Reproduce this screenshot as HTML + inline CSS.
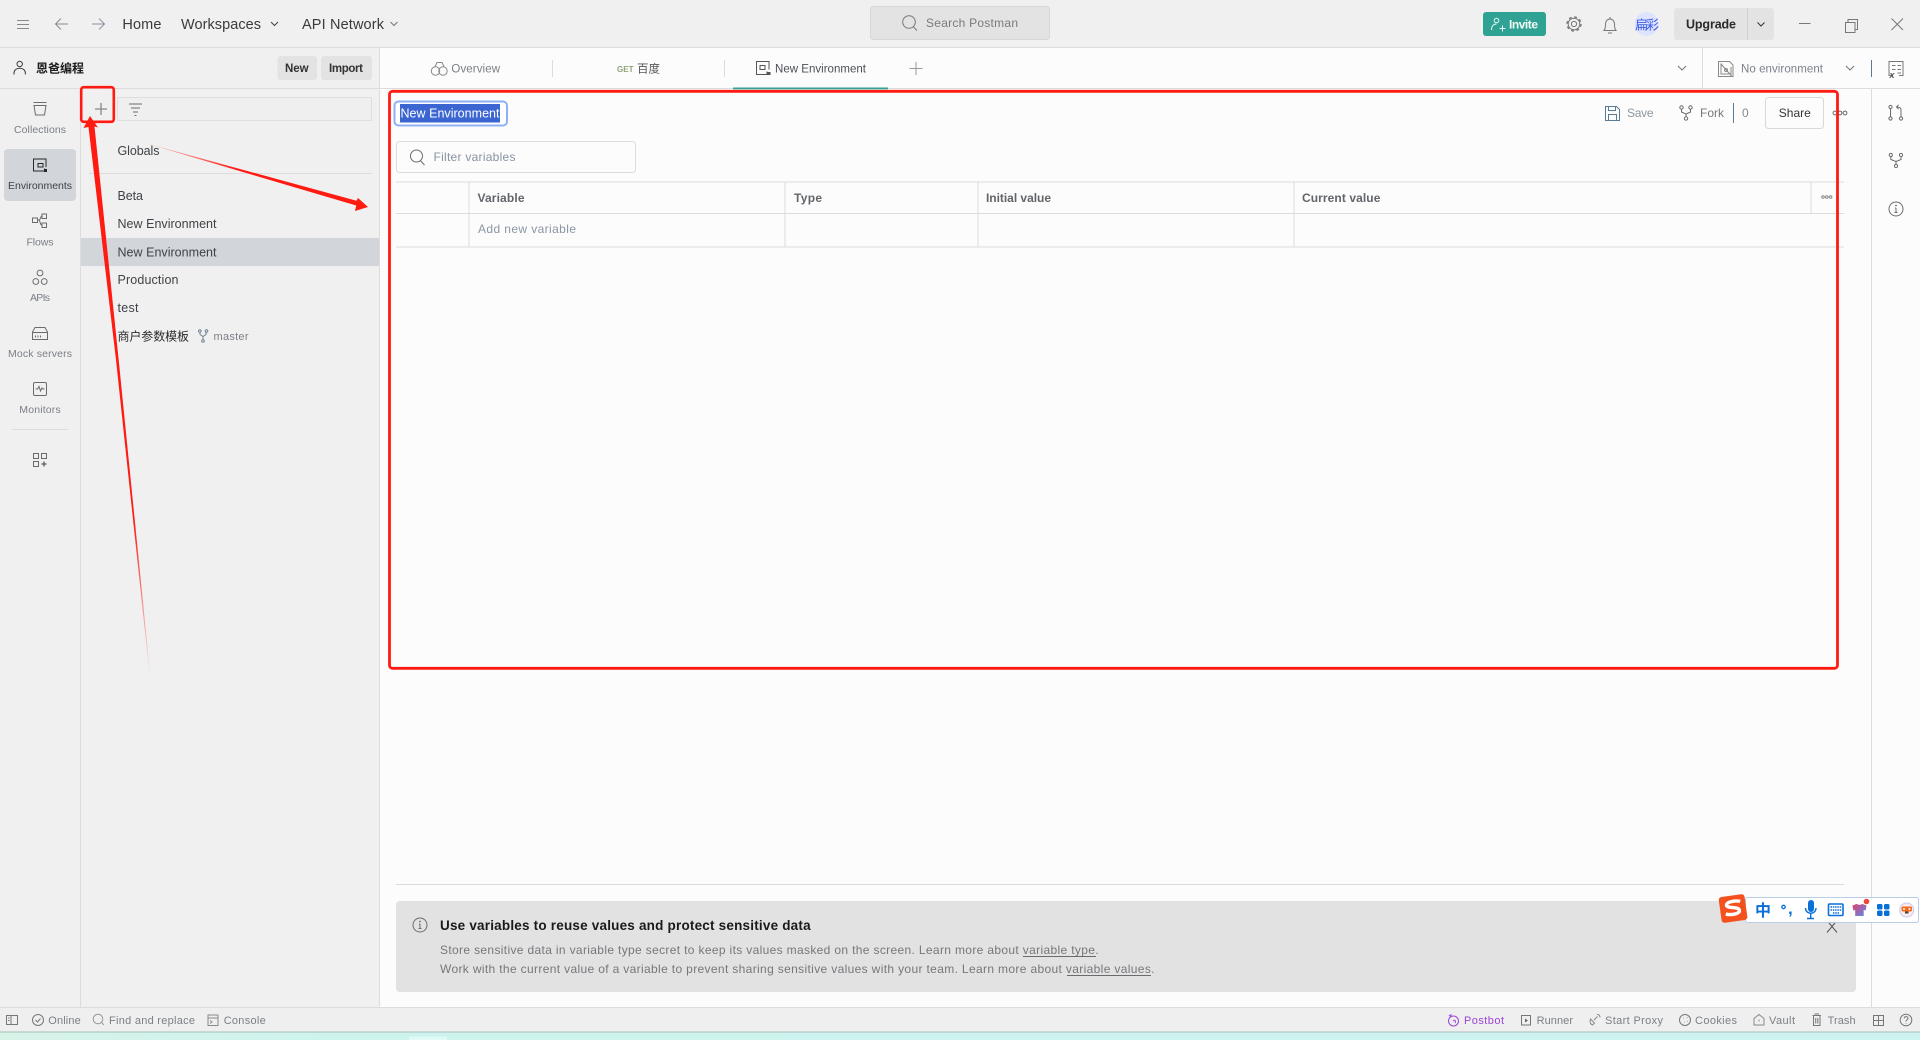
<!DOCTYPE html>
<html lang="en">
<head>
<meta charset="utf-8">
<title>Postman - New Environment</title>
<style>
html,body{margin:0;padding:0;width:1920px;height:1040px;overflow:hidden;background:#f0f0f0}
svg{display:block;filter:blur(.3px)}
text{font-family:"Liberation Sans","Noto Sans CJK SC",sans-serif;font-size:12px;fill:#6b6b6b}
.i{fill:none;stroke:#6b6b6b;stroke-width:1}
.nav{font-size:10.5px;fill:#7a7f86}
.li{font-size:12.5px;fill:#3f4247}
.top{font-size:14.5px;fill:#3a3a3a}
.st{font-size:11px;fill:#7b7f86}
.hd{font-weight:700;fill:#62656a;font-size:12px}
</style>
</head>
<body>
<svg width="1920" height="1040" viewBox="0 0 1920 1040" xmlns="http://www.w3.org/2000/svg">
<defs>
<linearGradient id="tl" x1="0" x2="1" y1="0" y2="0"><stop offset="0" stop-color="#d6f3e8"/><stop offset=".2" stop-color="#cdf3ef"/><stop offset="1" stop-color="#cdf2f0"/></linearGradient>
<linearGradient id="sh" x1="0" x2="1" y1="0" y2="1"><stop offset="0" stop-color="#e0406a"/><stop offset="1" stop-color="#5a8cf5"/></linearGradient>
<linearGradient id="a1" gradientUnits="userSpaceOnUse" x1="0" y1="520" x2="0" y2="677"><stop offset="0" stop-color="#ff1a12"/><stop offset="1" stop-color="#ff1a12" stop-opacity="0"/></linearGradient>
<linearGradient id="a2" gradientUnits="userSpaceOnUse" x1="143" y1="143" x2="240" y2="170"><stop offset="0" stop-color="#ff1a12" stop-opacity=".15"/><stop offset="1" stop-color="#ff1a12"/></linearGradient>
</defs>

<!-- backgrounds -->
<rect width="1920" height="1040" fill="#f0f0f0"/>
<rect x="380" y="47" width="1540" height="960" fill="#fcfcfc"/>
<rect x="0" y="47" width="1920" height="1" fill="#dcdcdc"/>
<rect x="0" y="88" width="1920" height="1" fill="#dcdcdc"/>
<rect x="80" y="88" width="1" height="919" fill="#dcdcdc"/>
<rect x="379" y="47" width="1" height="960" fill="#dcdcdc"/>
<rect x="1871" y="88" width="1" height="919" fill="#dcdcdc"/>

<!-- title bar -->
<g class="i"><path d="M17 20.500h12M17 24.500h12M17 28.500h12" style="stroke:#8a8a8a"/>
<path d="M68 24H56M61 18.500L55.500 24 61 29.500" style="stroke:#8a8a8a"/>
<path d="M92 24h12M99 18.500l5.500 5.500-5.500 5.500" style="stroke:#8a94a0"/>
<path d="M271 22l3.500 3.500 3.500-3.500" style="stroke:#444"/>
<path d="M390.500 22l3.500 3.500 3.500-3.500" style="stroke:#777"/></g>
<text class="top" x="122.400" y="29" textLength="39">Home</text>
<text class="top" x="181" y="29" textLength="80">Workspaces</text>
<text class="top" x="302" y="29" textLength="82">API Network</text>

<rect x="870.500" y="6.500" width="179" height="33" rx="3" fill="#e3e3e3" stroke="#d6d6d6"/>
<g class="i" style="stroke:#777"><circle cx="909" cy="22" r="6.300"/><path d="M913.500 27l3.500 3.500"/></g>
<text x="926" y="27" textLength="92" style="fill:#7a7a7a">Search Postman</text>

<rect x="1483" y="12" width="63" height="24" rx="3" fill="#2fa294"/>
<g class="i" style="stroke:#e8f6f3"><circle cx="1496.500" cy="20.500" r="2.300"/><path d="M1491.500 30c0-4 2-6 5-6M1499.500 28.500h6M1502.500 25.500v6"/></g>
<text x="1509" y="28.500" textLength="29" style="fill:#f4fbf9;font-weight:700;font-size:12px">Invite</text>

<g class="i" style="stroke:#777"><circle cx="1574" cy="24" r="2.600"/><circle cx="1574" cy="24" r="5.800"/><circle cx="1574" cy="24" r="7" stroke-width="1.400" stroke-dasharray="2.800 2.700"/>
<path d="M1604 30.500c1.300-1.500 1.500-3 1.500-6 0-3.500 2-5.500 4.500-5.500s4.500 2 4.500 5.500c0 3 .2 4.500 1.500 6zM1610 17v2M1608 33h4"/></g>
<circle cx="1646.500" cy="24" r="12" fill="#e0e3ff"/>
<text x="1635" y="29.500" textLength="24" style="font-size:13px;fill:#3a5ce8">扁彩</text>

<rect x="1674" y="8" width="100" height="32" rx="3" fill="#e3e3e3"/>
<rect x="1747" y="8" width="1" height="32" fill="#d0d0d0"/>
<text x="1686" y="28.500" textLength="50" style="font-size:12.500px;fill:#2a2a2a;font-weight:700">Upgrade</text>
<path class="i" d="M1757.500 22.500l3.500 3.500 3.500-3.500" style="stroke:#333"/>
<g class="i" style="stroke:#777"><path d="M1799 23.500h11.500"/><path d="M1845.500 22.500h9.500v10h-9.500zM1848 22.500v-3h9.500v10h-2.500"/><path d="M1891.500 18.500l11.500 11.500M1903 18.500l-11.500 11.500"/></g>

<!-- workspace header -->
<g class="i" style="stroke:#3a3d42"><circle cx="19.700" cy="64" r="2.700"/><path d="M14 74.500v-1.500c0-3 2.500-4.800 5.700-4.800s5.700 1.800 5.700 4.800v1.500"/></g>
<text x="36" y="72.500" textLength="48" style="font-size:12px;fill:#1c1c1c;font-weight:700">恩爸编程</text>
<rect x="277.500" y="56" width="39.500" height="24" rx="3" fill="#e3e3e3"/>
<rect x="321" y="56" width="51" height="24" rx="3" fill="#e3e3e3"/>
<text x="285" y="72" textLength="23.600" style="font-size:11.500px;fill:#333;font-weight:700">New</text>
<text x="329" y="72" textLength="34" style="font-size:11.500px;fill:#333;font-weight:700">Import</text>

<!-- left nav -->
<rect x="4" y="149" width="72" height="52" rx="4" fill="#d2d5d9"/>
<g class="i">
<path d="M33.500 102.500h13M34 105.500h12l-1.500 9.500h-9z"/>
<path d="M44.500 168.500v2.500h-11v-12h12.500v8M38 163.500h5v3.500h-5z" style="stroke:#25282c"/>
<rect x="32.500" y="218" width="5" height="4.500"/><rect x="42" y="214" width="4.500" height="4.500"/><rect x="42" y="223" width="4.500" height="4.500"/><path d="M37.500 220h2c2-3 1-4 2.500-4M39.500 220.500c1 3 1 4.500 2.500 4.500"/>
<circle cx="40" cy="273" r="2.900"/><circle cx="35.800" cy="281.500" r="2.900"/><circle cx="44.200" cy="281.500" r="2.900"/>
<path d="M32.500 339.500v-7.500l2.500-4.500h10l2.500 4.500v7.500zM32.500 332.500h15M35.500 335.500v2M38 335.500v2M40.500 335.500v2"/>
<rect x="33.500" y="382.500" width="13" height="13" rx="1.500"/><path d="M35.500 389l2 0 1.500-2.500 1.500 4.500 1.500-3 1 1h1.500"/>
<rect x="33.500" y="453.500" width="5" height="5"/><rect x="41.500" y="453.500" width="5" height="5"/><rect x="33.500" y="461.500" width="5" height="5"/><path d="M44 461.500v5M41.500 464h5" stroke-width="1.500"/>
</g>
<rect x="44" y="169" width="3" height="3" fill="#25282c"/>
<text class="nav" x="14" y="133" textLength="52">Collections</text>
<text class="nav" x="8" y="189" textLength="64" style="fill:#3f4247">Environments</text>
<text class="nav" x="26.500" y="245.500" textLength="27">Flows</text>
<text class="nav" x="30" y="301" textLength="20">APIs</text>
<text class="nav" x="8" y="357" textLength="64">Mock servers</text>
<text class="nav" x="19.300" y="413" textLength="41.400">Monitors</text>
<rect x="12" y="429" width="56" height="1" fill="#dcdcdc"/>

<!-- list -->
<path class="i" d="M101 103v12M95 109h12" style="stroke:#888;stroke-width:1.300"/>
<rect x="117.500" y="97.500" width="254" height="23" rx="1" fill="#efefef" stroke="#dedede"/>
<path class="i" d="M129 104h13M131 108h9M133 112h5M134.500 115.500h2"/>
<text class="li" x="117.500" y="155" textLength="42">Globals</text>
<rect x="89" y="173" width="283" height="1" fill="#dcdcdc"/>
<text class="li" x="117.500" y="200" textLength="25.500">Beta</text>
<text class="li" x="117.500" y="228" textLength="99">New Environment</text>
<rect x="81" y="238" width="298" height="28" fill="#d2d5d9"/>
<text class="li" x="117.500" y="256.500" textLength="99">New Environment</text>
<text class="li" x="117.500" y="284" textLength="61">Production</text>
<text class="li" x="117.500" y="312" textLength="21">test</text>
<text class="li" x="117.500" y="340.500" textLength="71.500" style="font-size:12px;fill:#2a2a2a">商户参数模板</text>
<g class="i" style="stroke:#6f8296"><circle cx="199.800" cy="331" r="1.300"/><circle cx="206.500" cy="331" r="1.300"/><circle cx="203" cy="341" r="1.300"/><path d="M200 332.500v2l3 2 3-2v-2M203 336.500v3"/></g>
<text x="213.500" y="340" textLength="35" style="font-size:11px;fill:#7b7f86">master</text>

<!-- tabs -->
<g class="i" style="stroke:#8a8a8a"><circle cx="435.500" cy="71" r="4.200"/><circle cx="443" cy="71" r="4.200"/><path d="M435 66.500l2-4h5l2 4"/></g>
<text x="451.400" y="72.500" textLength="48.600" style="font-size:11.500px;fill:#7b7f86">Overview</text>
<rect x="552" y="60" width="1" height="17" fill="#dcdcdc"/>
<text x="617" y="72" textLength="16.500" style="font-size:8px;font-weight:700;fill:#8ea57a">GET</text>
<text x="637" y="72.500" textLength="23" style="font-size:11.500px;fill:#555">百度</text>
<rect x="724" y="60" width="1" height="17" fill="#dcdcdc"/>
<g class="i" style="stroke:#555"><path d="M767 71.500v3h-10.500v-13h12.500v8M760 65.500h5v4h-5z"/></g>
<rect x="767.500" y="72" width="3" height="3" fill="#555"/>
<text x="775" y="72.500" textLength="91" style="font-size:11.500px;fill:#4c5056">New Environment</text>
<rect x="733" y="87.500" width="155" height="1.800" fill="#2fa294"/>
<path class="i" d="M916 62v13M909.500 68.500h13" style="stroke:#999"/>
<path class="i" d="M1678 66l4 4 4-4" style="stroke:#777"/>
<rect x="1702" y="47" width="1" height="41" fill="#dcdcdc"/>
<g class="i" style="stroke:#888"><path d="M1718.500 61.500h11l3.500 3.500v11.500h-14.500zM1722 64h-1v10h10v-7M1721 64l11 12.500"/><circle cx="1726" cy="70" r="1.500"/></g>
<text x="1741" y="72.500" textLength="82" style="font-size:11.500px;fill:#7a828c">No environment</text>
<path class="i" d="M1846 66l4 4 4-4" style="stroke:#777"/>
<rect x="1871" y="60" width="1" height="17" fill="#5d7a94"/>
<g class="i" style="stroke:#777"><path d="M1893 75.500h-4v-14h14v14h-4M1892 65.500h3.500M1892 69.500h3.500M1897.500 65.500h3.500M1897.500 69.500h3.500M1897.500 73h3.500"/></g>
<text x="1889.500" y="78" style="font-size:9px;font-weight:700;font-style:italic;fill:#555">x</text>

<!-- environment head -->
<rect x="394.500" y="101.500" width="112.500" height="24" rx="4" fill="#fff" stroke="#8fb0f5" stroke-width="2"/>
<rect x="400" y="104" width="100" height="18.500" fill="#3b65d0"/>
<text x="400.500" y="117.500" textLength="99" style="font-size:12.500px;fill:#fff">New Environment</text>
<g class="i" style="stroke:#5d7a94"><path d="M1605.500 106.500h11l3 3v11h-14zM1608.500 106.500v4h7v-4M1608.500 120.500v-6h8v6"/></g>
<text x="1627" y="117" textLength="26.500" style="font-size:12px;fill:#8d97a1">Save</text>
<g class="i"><circle cx="1681.500" cy="107.500" r="1.700"/><circle cx="1690.500" cy="107.500" r="1.700"/><circle cx="1686" cy="118.500" r="1.700"/><path d="M1681.500 109.500v2.500l4.500 2 4.500-2v-2.500M1686 114v3"/></g>
<text x="1700" y="117" textLength="24" style="font-size:12px;fill:#777">Fork</text>
<rect x="1733" y="103" width="1" height="20" fill="#5d7a94"/>
<text x="1742" y="117" textLength="7" style="font-size:12px;fill:#888">0</text>
<rect x="1765.500" y="97.500" width="58" height="31" rx="3" fill="#fcfcfc" stroke="#d8d8d8"/>
<text x="1778.800" y="117" textLength="32" style="font-size:12px;fill:#333">Share</text>
<g class="i"><circle cx="1835" cy="113" r="1.900"/><circle cx="1840" cy="113" r="1.900"/><circle cx="1845" cy="113" r="1.900"/></g>

<rect x="396.500" y="141.500" width="239" height="31" rx="3" fill="#fcfcfc" stroke="#dcdcdc"/>
<g class="i"><circle cx="416.500" cy="156" r="6"/><path d="M420.700 161l3.800 4"/></g>
<text x="433.500" y="161" textLength="82" style="font-size:12px;fill:#8793a0">Filter variables</text>

<!-- table -->
<g fill="#dcdcdc">
<rect x="396" y="181.500" width="1448" height="1"/>
<rect x="396" y="213" width="1448" height="1"/>
<rect x="396" y="246.500" width="1448" height="1"/>
<rect x="468.500" y="182" width="1" height="65"/>
<rect x="784.500" y="182" width="1" height="65"/>
<rect x="977.500" y="182" width="1" height="65"/>
<rect x="1293.500" y="182" width="1" height="65"/>
<rect x="1810.500" y="182" width="1" height="32"/>
</g>
<text class="hd" x="477.500" y="202" textLength="47">Variable</text>
<text class="hd" x="794" y="202" textLength="28">Type</text>
<text class="hd" x="986" y="202" textLength="65">Initial value</text>
<text class="hd" x="1302" y="202" textLength="78.400">Current value</text>
<g class="i" style="stroke:#888"><circle cx="1823" cy="197" r="1.300"/><circle cx="1826.800" cy="197" r="1.300"/><circle cx="1830.600" cy="197" r="1.300"/></g>
<text x="478" y="233" textLength="98" style="font-size:12px;fill:#8a96a3">Add new variable</text>

<!-- right rail -->
<g class="i"><circle cx="1890.500" cy="107" r="1.600"/><circle cx="1890.500" cy="118.500" r="1.600"/><circle cx="1901" cy="118.500" r="1.600"/><path d="M1890.500 109v8M1901 117v-7c0-2-1-3-4-3M1898.500 104.800l-2 2.200 2 2.200"/>
<circle cx="1890.800" cy="155" r="1.600"/><circle cx="1901" cy="155" r="1.600"/><circle cx="1896" cy="166" r="1.600"/><path d="M1890.800 156.800v2.700l5.200 2 5-2v-2.700M1896 161.500v3"/>
<circle cx="1896" cy="209" r="7"/><path d="M1896 208v4.500M1894.500 212.500h3M1895 208h1"/></g>
<circle cx="1896" cy="205.500" r=".9" fill="#6b6b6b"/>

<!-- tip panel -->
<rect x="396" y="884" width="1448" height="1" fill="#dcdcdc"/>
<rect x="396" y="901" width="1460" height="91" rx="4" fill="#e2e2e2"/>
<g class="i"><circle cx="420" cy="925" r="7"/><path d="M420 924v4.500M418.500 928.500h3M419 924h1"/></g>
<circle cx="420" cy="921.500" r=".9" fill="#6b6b6b"/>
<text x="440" y="930" textLength="370.600" style="font-size:13.500px;font-weight:700;fill:#1a1a1a">Use variables to reuse values and protect sensitive data</text>
<text x="440" y="954" textLength="658.600" style="font-size:12px;fill:#75777b">Store sensitive data in variable type secret to keep its values masked on the screen. Learn more about variable type.</text>
<text x="440" y="973" textLength="714.500" style="font-size:12px;fill:#75777b">Work with the current value of a variable to prevent sharing sensitive values with your team. Learn more about variable values.</text>
<rect x="1023" y="956" width="73" height="1" fill="#6b6b6b"/>
<rect x="1067" y="975" width="84" height="1" fill="#6b6b6b"/>
<path class="i" d="M1827 932.500l10-12M1837 932.500l-10-12" style="stroke:#555"/>

<!-- status bar -->
<rect x="0" y="1007" width="1920" height="25" fill="#efefef"/>
<rect x="0" y="1007" width="1920" height="1" fill="#dcdcdc"/>
<rect x="0" y="1032" width="1920" height="8" fill="url(#tl)"/>
<rect x="0" y="1031.500" width="1920" height="1" fill="#a9bdba"/>
<path d="M409 1040v-1c0-2 1-2.500 3-2.500h32c2 0 3 .5 3 2.500v1z" fill="#e0faf6"/>

<g class="i" style="stroke:#777"><rect x="6.500" y="1015.500" width="11" height="9"/><path d="M11 1015.500v9M8 1018h1.500M8 1020.500h1.500"/>
<circle cx="38" cy="1020" r="5.500"/><path d="M35.500 1020l2 2 3-3.500"/>
<circle cx="98" cy="1019" r="4.800" style="stroke:#999"/><path d="M101.500 1022.500l2.500 2.500" style="stroke:#999"/>
<rect x="208" y="1015" width="10" height="10.500" style="stroke:#888"/><path d="M208 1018h10M210 1020.500l2 1.500-2 1.500" style="stroke:#888"/></g>
<text class="st" x="48.300" y="1024" textLength="32.400">Online</text>
<text class="st" x="109" y="1024" textLength="86">Find and replace</text>
<text class="st" x="223.700" y="1024" textLength="42">Console</text>

<g class="i" style="stroke:#9b45d6"><circle cx="1453.500" cy="1021" r="5"/><path d="M1449 1015l2 2M1451 1014v3M1453 1021c2-2 3 0 2 2"/></g>
<text class="st" x="1464" y="1024" textLength="40" style="fill:#9b45d6">Postbot</text>
<g class="i" style="stroke:#777"><rect x="1521.500" y="1015.500" width="9" height="9.500"/></g><path d="M1525 1018.500l3 2-3 2z" fill="#666"/>
<text class="st" x="1536.600" y="1024" textLength="36.400">Runner</text>
<g class="i" style="stroke:#888"><path d="M1590.500 1019l4 4 -2 2c-2-1-3-3-2-6zM1594 1020l3.500-3.500M1597 1014.500c2 0 3 1 3 3"/></g>
<text class="st" x="1605" y="1024" textLength="58">Start Proxy</text>
<g class="i" style="stroke:#777"><circle cx="1685" cy="1020" r="5.500"/><path d="M1683 1018h.5M1687 1017.500h.5M1684.500 1022h.5M1687.500 1021.500h.5"/></g>
<text class="st" x="1695" y="1024" textLength="42">Cookies</text>
<g class="i" style="stroke:#888"><path d="M1754 1025v-6.500l5-4 5 4v6.500zM1759 1019.500v2"/></g>
<text class="st" x="1769" y="1024" textLength="26">Vault</text>
<g class="i" style="stroke:#777"><path d="M1812.500 1015.500h8.500M1814.500 1014h4.500M1813.500 1016v9.500h6.500v-9.500M1815.700 1018v5.500M1817.800 1018v5.500"/></g>
<text class="st" x="1827.600" y="1024" textLength="28">Trash</text>
<g class="i" style="stroke:#777"><rect x="1873.500" y="1015.500" width="10" height="10"/><path d="M1878.500 1015.500v10M1873.500 1020.500h10"/></g>
<g class="i" style="stroke:#777"><circle cx="1906" cy="1020" r="5.800"/><path d="M1904.200 1018.500c0-2.500 3.800-2.500 3.800-.2 0 1.500-2 1.500-2 3.200M1906 1023v.6"/></g>

<!-- red annotations -->
<rect x="81.200" y="87.200" width="32.600" height="34.600" rx="2.500" fill="none" stroke="#ff1a12" stroke-width="2.600"/>
<rect x="389.500" y="91.300" width="1448" height="577" rx="3" fill="none" stroke="#ff1a12" stroke-width="2.800"/>
<polygon points="90,116 98,127.500 94.500,126.500 118.700,360 150.500,677 149.800,677 116,360 88.500,127 83.500,128" fill="url(#a1)"/>
<polygon points="143,142.500 356.500,200.800 358,198 368,207 355,211 356.200,205.500" fill="url(#a2)"/>

<!-- IME toolbar -->
<rect x="1745.500" y="897.500" width="173" height="25" rx="2" fill="#fff" stroke="#b9cfe8"/>
<g transform="rotate(-8 1733 908)">
<rect x="1720" y="895.500" width="26" height="26" rx="3" fill="#f4511e"/>
<path d="M1741 902.500c-3-1.500-13-2-14 1.500-1 4 12 3 12 7s-9 4-14 2" fill="none" stroke="#fff" stroke-width="3.400"/>
</g>
<text x="1755" y="916" textLength="16" style="font-size:16px;font-weight:700;fill:#0b6fd8">中</text>
<circle cx="1783.500" cy="907" r="1.700" fill="none" stroke="#0b6fd8" stroke-width="1.300"/>
<text x="1788" y="914" style="font-size:17px;font-weight:700;fill:#0b6fd8">,</text>
<rect x="1808" y="900" width="6" height="12" rx="3" fill="#0b6fd8"/>
<path d="M1805.500 908c0 7 10.500 7 10.500 0M1810.700 913v5M1807 918.500h7" fill="none" stroke="#0b6fd8" stroke-width="1.400"/>
<rect x="1828.500" y="904" width="14.500" height="11.500" rx="1" fill="#fff" stroke="#0b6fd8" stroke-width="1.600"/>
<path d="M1830.500 907h11M1830.500 910h11M1833 913h6" stroke="#0b6fd8" stroke-width="1.600" stroke-dasharray="1.500 .8" fill="none"/>
<path d="M1852.500 905.500l4-1.500 3 1 3-1 4 1.500-.8 5-2-.5v6h-8.500v-6l-2 .5z" fill="url(#sh)"/>
<circle cx="1866.500" cy="901.500" r="2.800" fill="#f0463c"/>
<rect x="1877" y="904" width="5.500" height="5.500" rx="1.500" fill="#0b6fd8"/>
<rect x="1884" y="904" width="5.500" height="5.500" rx="1.500" fill="#0b6fd8"/>
<rect x="1877" y="910.500" width="5.500" height="5.500" rx="1.500" fill="#0b6fd8"/>
<rect x="1884" y="910.500" width="5.500" height="5.500" rx="1.500" fill="#0b6fd8"/>
<circle cx="1906.700" cy="910" r="7" fill="#fde8ea" stroke="#c3c8f5"/>
<rect x="1901.500" y="906.500" width="10.500" height="5" rx="1.500" fill="#f26a1c"/>
<circle cx="1904" cy="909" r="1" fill="#fff"/><circle cx="1909.500" cy="909" r="1" fill="#fff"/>
<rect x="1905" y="911.500" width="3.500" height="2" fill="#444"/>
</svg>
</body>
</html>
